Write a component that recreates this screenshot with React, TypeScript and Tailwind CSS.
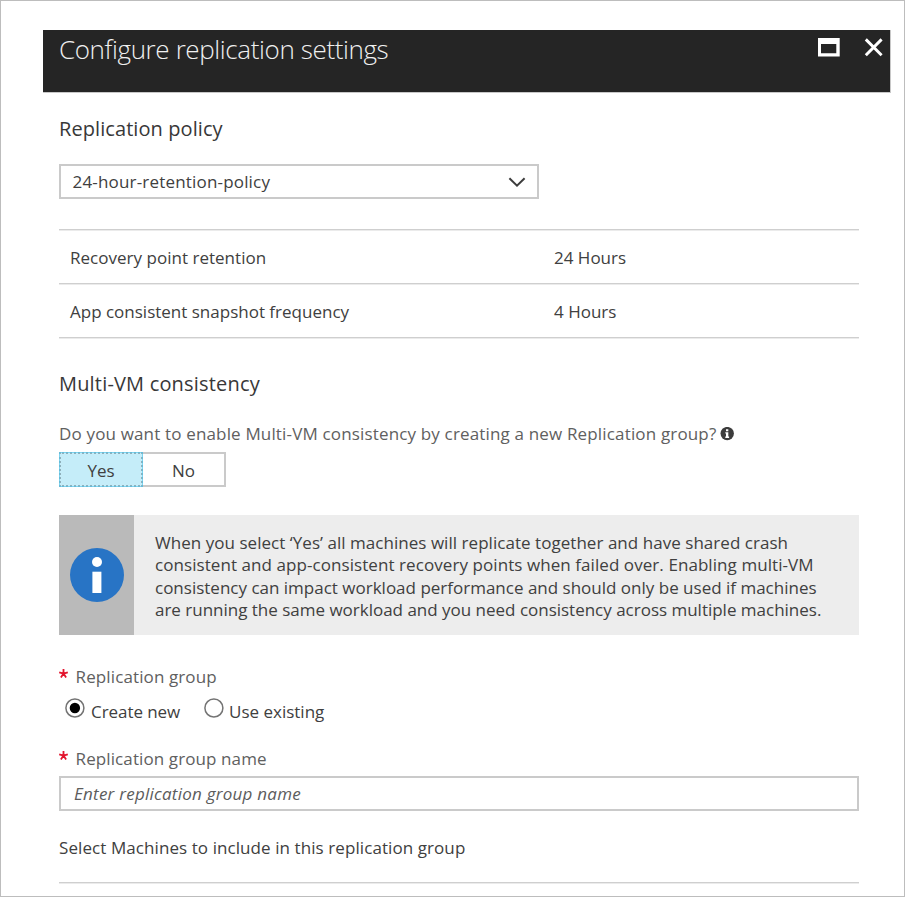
import type { ReactNode } from 'react';

function MaximizeIcon() {
  return (
    <svg width="22" height="19" viewBox="0 0 22 19" className="block">
      <path fillRule="evenodd" fill="#fff" d="M0 0H21.7V18.5H0ZM3 6V15.3H18.3V6Z" />
    </svg>
  );
}

function CloseIcon() {
  return (
    <svg width="20" height="20" viewBox="0 0 20 20" className="block">
      <path d="M1.8 1.4L17.6 17.2M17.6 1.4L1.8 17.2" stroke="#fff" strokeWidth="2.9" fill="none" />
    </svg>
  );
}

function SmallInfoIcon() {
  return (
    <svg width="14" height="14" viewBox="0 0 14 14" className="block">
      <circle cx="7.2" cy="6.6" r="6.7" fill="#3c3c3c" />
      <path d="M6 2.2H8.3V4.3H6ZM5.3 5.3H8.3V9.6H9.1V10.9H5.3V9.6H6V6.6H5.3Z" fill="#fff" />
    </svg>
  );
}

function LargeInfoIcon() {
  return (
    <svg width="54" height="54" viewBox="0 0 54 54" className="block">
      <circle cx="27" cy="27" r="27" fill="#2874c5" />
      <circle cx="27" cy="14" r="5" fill="#fff" />
      <rect x="22.4" y="23.7" width="9" height="21.3" fill="#fff" />
    </svg>
  );
}

function Radio({ checked }: { checked?: boolean }) {
  return (
    <svg width="20" height="20" viewBox="0 0 20 20" className="block">
      <circle cx="9.9" cy="10" r="9" fill="#fff" stroke="#747474" strokeWidth="1.5" />
      {checked && <circle cx="9.9" cy="10" r="5.2" fill="#000" />}
    </svg>
  );
}

function Asterisk() {
  return (
    <svg width="9" height="10" viewBox="0 0 9 10" className="block">
      <path
        d="M4.5 4.6V0M4.5 4.6L0.2 3.3M4.5 4.6L8.8 3.3M4.5 4.6L1.9 8.5M4.5 4.6L7.1 8.5"
        stroke="#e2142d"
        strokeWidth="1.8"
        fill="none"
      />
    </svg>
  );
}

function PolicyRow({ label, value }: { label: ReactNode; value: string }) {
  return (
    <div className="flex h-[54px] items-center border-b border-[#cfcfcf] pt-[3px] pl-[11px] leading-6 shadow-[0_1px_0_#ebebeb]">
      <span className="w-[484px]">{label}</span>
      <span>{value}</span>
    </div>
  );
}

export default function App() {
  return (
    <div className="h-[897px] w-[905px] overflow-hidden border border-[#bdbdbd] bg-white pt-[29px] pl-[42px] font-['Open_Sans','Noto_Sans',sans-serif] text-[17px] text-[#404040]">
      <header className="flex h-[63px] w-[848px] justify-between border-r border-b border-[#c8c8c8] bg-[#252525] pl-[16px]">
        <h1 className="h-[38px] text-[26px] leading-[38px] font-light tracking-[-0.38px] text-[#f0f0f0]">
          Configure replication settings
        </h1>
        <div className="flex gap-[24.5px] pt-2 pr-[6px]">
          <MaximizeIcon />
          <CloseIcon />
        </div>
      </header>

      <main className="ml-4 w-[800px]">
        <h2 className="mt-[21px] h-[30px] text-[20px] leading-[30px] tracking-[0.08px] text-[#383838]">
          Replication policy
        </h2>

        <div className="mt-[20px] flex h-[35px] w-[480px] items-center justify-between border-2 border-[#cacaca] pr-[11px] pl-[11.5px]">
          <span className="leading-6 tracking-[0.18px]">24-hour-retention-policy</span>
          <svg width="18" height="10" viewBox="0 0 18 10" className="block">
            <path d="M1.4 1.2L9 8.6L16.6 1.2" stroke="#3c3c3c" strokeWidth="2" fill="none" />
          </svg>
        </div>

        <section className="mt-[30px]">
          <div className="h-px bg-[#cfcfcf] shadow-[0_1px_0_#ebebeb]" />
          <PolicyRow label={<span className="tracking-[0.02px]">Recovery point retention</span>} value="24 Hours" />
          <PolicyRow label="App consistent snapshot frequency" value="4 Hours" />
        </section>

        <h2 className="mt-[31px] h-[30px] text-[20px] leading-[30px] tracking-[0.18px] text-[#383838]">
          Multi-VM consistency
        </h2>

        <div className="mt-[23px] flex h-6 items-center gap-1 text-[#606060]">
          <span className="leading-6 tracking-[0.16px] whitespace-nowrap">
            Do you want to enable Multi-VM consistency by creating a new Replication group?
          </span>
          <SmallInfoIcon />
        </div>

        <div className="mt-[6px] flex h-[35px] w-[167px] text-center leading-[34px]">
          <div className="w-[84px] border-2 border-dotted border-[#8fb0bb] bg-[#c5edf9] outline-1 -outline-offset-1 outline-[#4fc3ea]/60">
            Yes
          </div>
          <div className="w-[83px] border-2 border-l-0 border-[#cacaca]">No</div>
        </div>

        <section className="mt-[28px] flex h-[120px] bg-[#ededed]">
          <div className="flex w-[75px] items-center justify-center bg-[#bababa]">
            <LargeInfoIcon />
          </div>
          <p className="pt-[16.6px] pl-[21px] leading-[22.5px] whitespace-nowrap">
            <span className="block tracking-[0.04px]">
              When you select ‘Yes’ all machines will replicate together and have shared crash
            </span>
            <span className="block tracking-[0.07px]">
              consistent and app-consistent recovery points when failed over. Enabling multi-VM
            </span>
            <span className="block">
              consistency can impact workload performance and should only be used if machines
            </span>
            <span className="block tracking-[-0.01px]">
              are running the same workload and you need consistency across multiple machines.
            </span>
          </p>
        </section>

        <div className="mt-[30px] flex h-6 items-start text-[#606060]">
          <div className="w-[16.6px] pt-1">
            <Asterisk />
          </div>
          <span className="leading-6 tracking-[0.11px]">Replication group</span>
        </div>

        <div className="mt-[9px] flex h-[26px] items-start pl-[6px] leading-[28px]">
          <label className="flex w-[139px] gap-[6px]">
            <Radio checked />
            <span className="tracking-[-0.06px]">Create new</span>
          </label>
          <label className="flex gap-[5px]">
            <Radio />
            <span>Use existing</span>
          </label>
        </div>

        <div className="mt-[23px] flex h-6 items-start text-[#606060]">
          <div className="w-[16.6px] pt-1">
            <Asterisk />
          </div>
          <span className="leading-6 tracking-[0.1px]">Replication group name</span>
        </div>
        <div className="mt-[5px] flex h-[35px] items-center border-2 border-[#cacaca] pl-[13px] leading-6 tracking-[0.24px] text-[#5c5c5c] italic">
          Enter replication group name
        </div>

        <div className="mt-[25px] h-[47px] border-b border-[#cfcfcf] leading-6 tracking-[0.08px] shadow-[0_1px_0_#ebebeb]">
          Select Machines to include in this replication group
        </div>
      </main>
    </div>
  );
}
